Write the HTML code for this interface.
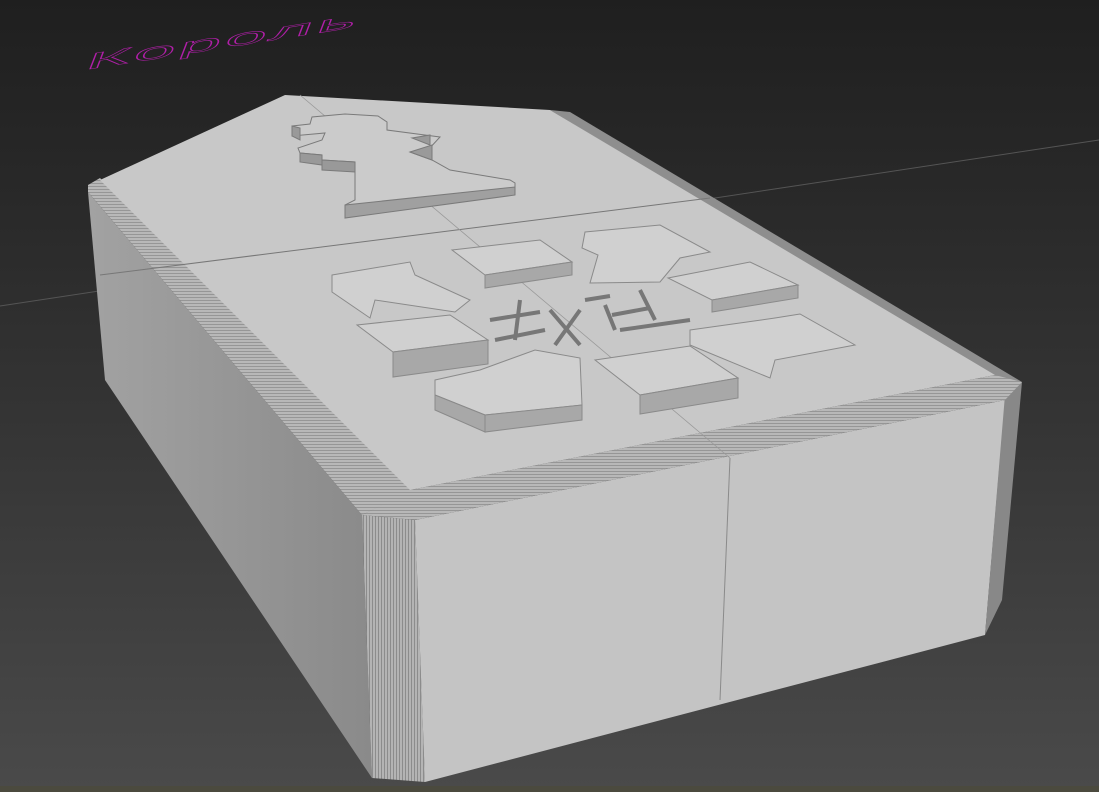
<!DOCTYPE html>
<html><head><meta charset="utf-8"><style>
html,body{margin:0;padding:0;width:1099px;height:792px;overflow:hidden;background:#333}
svg{display:block}
</style></head><body>
<svg width="1099" height="792" viewBox="0 0 1099 792" xmlns="http://www.w3.org/2000/svg">
<defs>
<linearGradient id="bg" x1="0" y1="0" x2="0" y2="1">
<stop offset="0" stop-color="#1f1f1f"/><stop offset="0.5" stop-color="#333"/><stop offset="1" stop-color="#4a4a4a"/>
</linearGradient>
<linearGradient id="left" x1="0" y1="0" x2="1" y2="0">
<stop offset="0" stop-color="#a2a2a2"/><stop offset="1" stop-color="#8a8a8a"/>
</linearGradient>
<pattern id="str" width="3" height="3" patternUnits="userSpaceOnUse">
<rect width="3" height="3" fill="#b4b4b4"/><rect width="1" height="3" fill="#8c8c8c"/>
</pattern>
<pattern id="strh" width="3" height="3" patternUnits="userSpaceOnUse">
<rect width="3" height="3" fill="#b8b8b8"/><rect width="3" height="1" fill="#969696"/>
</pattern>
</defs>
<rect width="1099" height="792" fill="url(#bg)"/>
<rect y="786" width="1099" height="6" fill="#4b4a3e"/>
<line x1="0" y1="306" x2="1099" y2="140" stroke="#555" stroke-width="1"/>
<text x="0" y="0" font-family="Liberation Sans, sans-serif" font-size="36" fill="none" stroke="#b01fa8" stroke-width="0.8" transform="translate(84,70) rotate(-9) skewX(-30) scale(2.1,0.6)" letter-spacing="2">Король</text>

<polygon points="88,192 362,515 372,778 105,380" fill="url(#left)"/>
<polygon points="88,185 100,178 412,490 362,515 88,192" fill="url(#strh)"/>
<polygon points="362,515 415,520 425,782 372,778" fill="url(#str)"/>
<polygon points="415,520 1005,400 985,635 425,782" fill="#c4c4c4"/>
<line x1="730" y1="458" x2="720" y2="700" stroke="#8a8a8a"/>
<polygon points="1005,395 1022,382 1002,600 985,635" fill="#888"/>
<polygon points="550,110 570,112 1022,382 995,378" fill="#8e8e8e"/>
<polygon points="410,490 995,375 1022,382 1005,400 415,520 362,515" fill="url(#strh)"/>
<polygon points="100,180 285,95 550,110 995,375 410,490" fill="#c8c8c8"/>
<line x1="100" y1="275" x2="710" y2="198" stroke="#777" stroke-width="1"/>
<line x1="300" y1="95" x2="730" y2="458" stroke="#999" stroke-width="0.8"/>

<g fill="#cbcbcb" stroke="#7a7a7a" stroke-width="1">
<polygon points="292,126 310,124 312,117 345,114 378,116 387,122 387,130 440,137 428,150 410,152 432,160 450,170 510,180 515,183 515,192 345,210 345,205 355,200 355,162 322,160 322,155 300,153 298,148 322,140 325,133 292,136"/>
<polygon points="292,126 300,128 300,140 292,136" fill="#999"/>
<polygon points="300,153 322,155 322,165 300,162" fill="#999"/>
<polygon points="322,160 355,162 355,172 322,170" fill="#999"/>
<polygon points="345,205 515,187 515,195 345,218" fill="#a0a0a0"/>
<polygon points="410,152 432,145 432,160" fill="#9a9a9a"/>
<polygon points="412,138 430,135 430,145" fill="#9a9a9a"/>
</g>
<g fill="#d0d0d0" stroke="#8a8a8a" stroke-width="1">
<polygon points="452,250 540,240 572,262 485,275"/>
<polygon points="485,275 572,262 572,275 485,288" fill="#a8a8a8"/>
<polygon points="668,278 750,262 798,285 712,300"/>
<polygon points="712,300 798,285 798,298 712,312" fill="#a8a8a8"/>
<polygon points="357,325 450,315 488,340 393,352"/>
<polygon points="393,352 488,340 488,364 393,377" fill="#a8a8a8"/>
<polygon points="595,360 690,346 738,378 640,395"/>
<polygon points="640,395 738,378 738,398 640,414" fill="#a8a8a8"/>
<polygon points="332,275 410,262 415,275 470,300 455,312 375,300 370,318 332,292"/>
<polygon points="585,232 660,225 710,252 680,258 660,282 590,283 598,255 582,248"/>
<polygon points="690,330 775,318 800,314 855,345 775,360 770,378 690,345"/>
<polygon points="435,380 480,370 535,350 580,358 582,405 535,410 485,415 435,395"/>
<polygon points="435,395 485,415 485,432 435,410" fill="#a8a8a8"/>
<polygon points="485,415 582,405 582,420 485,432" fill="#a8a8a8"/>
</g>
<g stroke="#777" stroke-width="4" fill="none">
<path d="M585,300 L610,296 M605,305 L615,330 M640,290 L655,320 M612,315 L650,308 M620,330 L690,320"/>
<path d="M490,320 L540,312 M520,300 L515,340 M495,340 L545,330 M550,310 L580,345 M580,310 L555,345"/>
</g>
</svg>
</body></html>
